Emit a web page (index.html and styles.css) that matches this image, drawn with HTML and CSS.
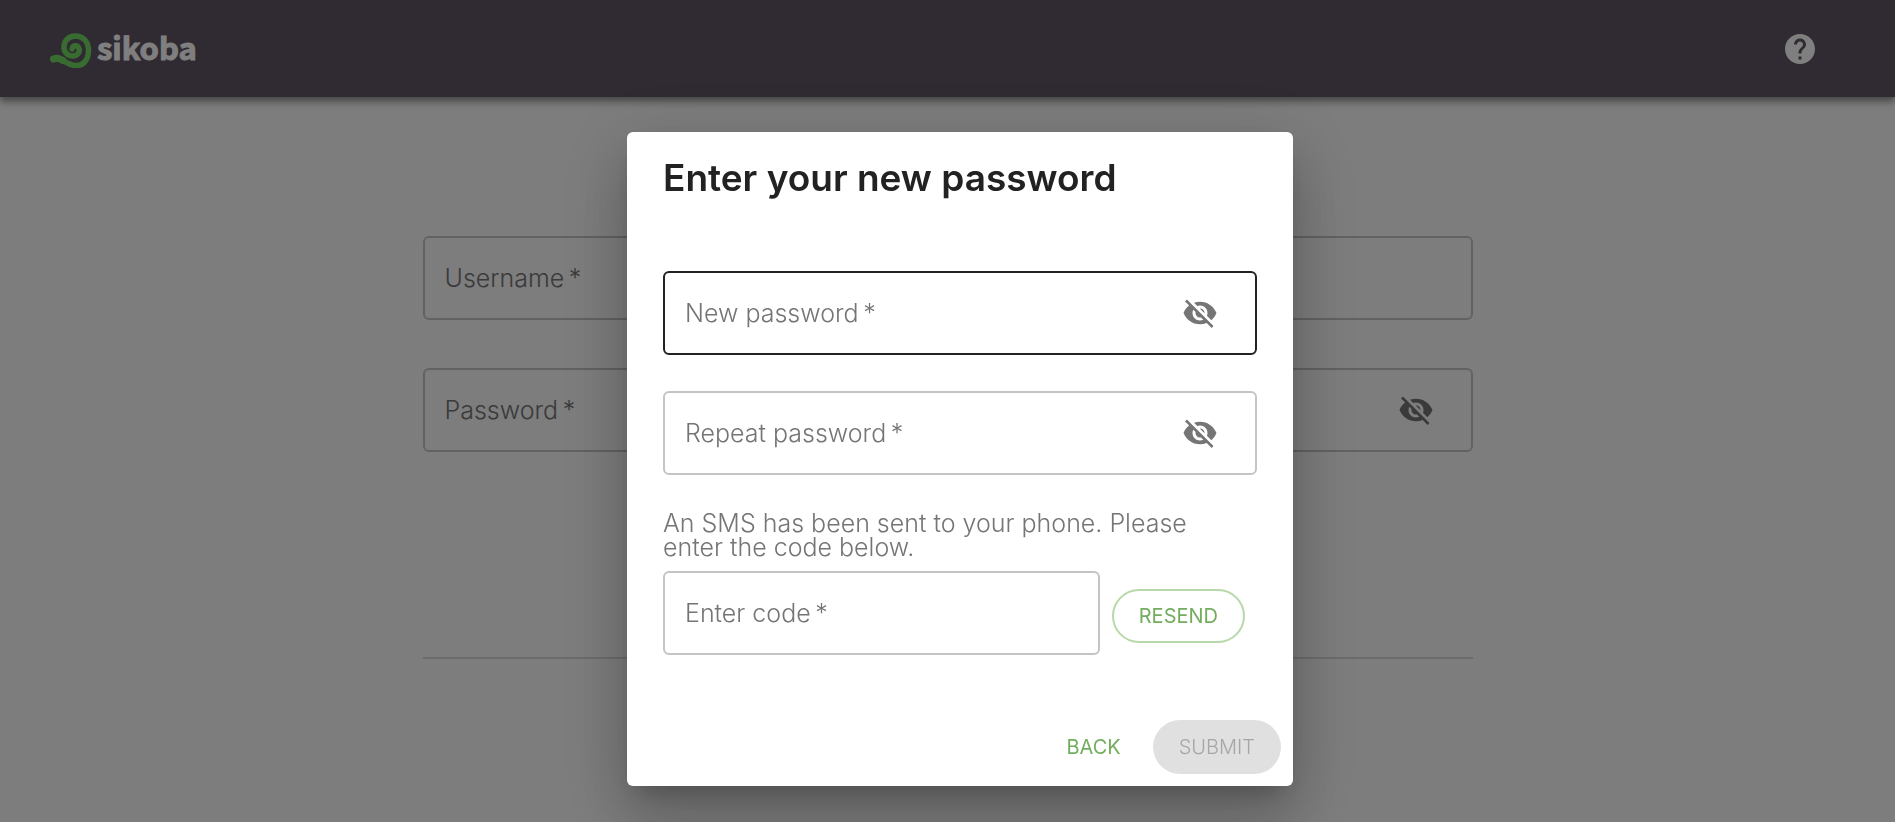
FILE: index.html
```html
<!DOCTYPE html>
<html lang="en">
<head>
<meta charset="utf-8">
<title>Sikoba – Enter your new password</title>
<link rel="stylesheet" href="styles.css">
</head>
<body>
<svg class="sprite" aria-hidden="true">
  <symbol id="eye-off" viewBox="0 0 24 24"><path d="M12 7c2.76 0 5 2.24 5 5 0 .65-.13 1.26-.36 1.83l2.92 2.92c1.51-1.26 2.7-2.89 3.43-4.75-1.73-4.39-6-7.5-11-7.5-1.4 0-2.74.25-3.98.7l2.16 2.16C10.74 7.13 11.35 7 12 7zM2 4.27l2.28 2.28.46.46C3.08 8.3 1.78 10.02 1 12c1.73 4.39 6 7.5 11 7.5 1.55 0 3.03-.3 4.38-.84l.42.42L19.73 22 21 20.73 3.27 3 2 4.27zM7.53 9.8l1.55 1.55c-.05.21-.08.43-.08.65 0 1.66 1.34 3 3 3 .22 0 .44-.03.65-.08l1.55 1.55c-.67.33-1.41.53-2.2.53-2.76 0-5-2.24-5-5 0-.79.2-1.53.53-2.2zm4.31-.78l3.15 3.15.02-.16c0-1.66-1.34-3-3-3l-.17.01z"/></symbol>
</svg>
<header class="topbar">
  <a class="logo" href="#">
    <svg class="logo-mark" viewBox="0 0 42 38" aria-hidden="true"><path stroke-width="7" d="M3.500 29C7 27.500 10 28.500 13 30.500"/><path stroke-width="5.500" d="M5 29.500C12 26.500 16 35.500 26 35.500C34 35.500 38.500 29 38.500 20.500C38.500 11 32.500 6 25.500 6C18 6 13.500 11.500 14 18C14.500 23.500 19 26.500 23.500 26C28 25.500 30 21.500 29 18.500C28 15 23 14.500 22 19"/></svg>
    <span class="logo-name">sikoba</span>
  </a>
  <a class="help" href="#" aria-label="Help">
    <svg class="icon" viewBox="0 0 24 24"><path d="M12 2C6.48 2 2 6.48 2 12s4.48 10 10 10 10-4.48 10-10S17.52 2 12 2zm1 17h-2v-2h2v2zm2.07-7.75l-.9.92C13.45 12.9 13 13.5 13 15h-2v-.5c0-1.1.45-2.1 1.17-2.83l1.24-1.26c.37-.36.59-.86.59-1.41 0-1.1-.9-2-2-2s-2 .9-2 2H8c0-2.21 1.79-4 4-4s4 1.79 4 4c0 .88-.36 1.68-.93 2.25z"/></svg>
  </a>
</header>
<main class="login">
  <div class="field">
    <label for="username">Username&thinsp;*</label>
    <input id="username" type="text" required>
  </div>
  <div class="field">
    <label for="password">Password&thinsp;*</label>
    <input id="password" type="password" required>
    <button class="reveal" type="button" aria-label="Show password"><svg class="icon"><use href="#eye-off"/></svg></button>
  </div>
  <hr class="divider">
</main>
<div class="backdrop">
  <form class="dialog" role="dialog" aria-labelledby="dialog-title">
    <h2 class="title" id="dialog-title">Enter your new password</h2>
    <div class="fields">
      <div class="field field-active">
        <label for="new-password">New password&thinsp;*</label>
        <input id="new-password" type="password" required>
        <button class="reveal" type="button" aria-label="Show password"><svg class="icon"><use href="#eye-off"/></svg></button>
      </div>
      <div class="field">
        <label for="repeat-password">Repeat password&thinsp;*</label>
        <input id="repeat-password" type="password" required>
        <button class="reveal" type="button" aria-label="Show password"><svg class="icon"><use href="#eye-off"/></svg></button>
      </div>
    </div>
    <p class="note">An SMS has been sent to your phone. Please enter the code below.</p>
    <div class="code-row">
      <div class="field">
        <label for="code">Enter code&thinsp;*</label>
        <input id="code" type="text" required>
      </div>
      <button class="btn btn-outline" type="button">RESEND</button>
    </div>
    <div class="actions">
      <button class="btn" type="button">BACK</button>
      <button class="btn btn-filled" type="submit" disabled>SUBMIT</button>
    </div>
  </form>
</div>
</body>
</html>
```
FILE: styles.css
```css
* { box-sizing: border-box; }
html, body { height: 100%; }
body {
  margin: 0;
  overflow: hidden;
  background: #fafafa;
  color: #222;
  font-family: Inter, "Liberation Sans", sans-serif;
  font-size: 25px;
  font-weight: 300;
}
.sprite { display: none; }
.icon { display: block; width: 36px; height: 36px; fill: currentColor; }

.topbar {
  position: relative;
  display: flex;
  align-items: center;
  justify-content: space-between;
  height: 97px;
  padding: 0 77px 0 50px;
  background: #605664;
  color: #fff;
  box-shadow: 0 3px 6px rgba(0, 0, 0, .3), 0 6px 8px rgba(0, 0, 0, .2);
}
.logo { display: flex; align-items: center; gap: 5px; color: inherit; text-decoration: none; }
.logo-mark { width: 42px; height: 38px; fill: none; stroke: #72d862; stroke-linecap: round; }
.logo-name {
  padding-bottom: 4px;
  font: 700 31px/36px "Noto Sans CJK JP", sans-serif;
  -webkit-text-stroke: 1px currentColor;
}
.help { color: inherit; }

.login {
  display: flex;
  flex-direction: column;
  gap: 48px;
  width: min(1050px, calc(100% - 48px));
  margin: 139px auto 0;
}
.divider { width: 100%; height: 2px; margin: 157px 0 0; border: 0; background: #d8d8d8; }

.field {
  display: grid;
  grid-template-columns: 1fr auto;
  align-items: center;
  height: 84px;
  padding: 0 37px 0 20px;
  border: 2px solid #c4c4c4;
  border-radius: 6px;
}
.field-active { border-color: #222; }
.field label { grid-area: 1 / 1; line-height: 28px; color: #757575; }
.field input {
  grid-area: 1 / 1;
  width: 100%;
  height: 48px;
  padding: 0;
  border: 0;
  outline: 0;
  background: transparent;
  font: inherit;
}
.reveal { padding: 0; border: 0; background: none; color: #757575; }

.backdrop {
  position: fixed;
  inset: 0;
  display: flex;
  align-items: flex-start;
  justify-content: center;
  padding: 132px 0 0 25px;
  background: rgba(0, 0, 0, .5);
}
.dialog {
  width: min(666px, 100%);
  padding: 24px 36px 12px;
  border-radius: 6px;
  background: #fff;
  box-shadow: 0 16px 22px -10px rgba(0, 0, 0, .2), 0 36px 57px 4px rgba(0, 0, 0, .14), 0 14px 69px 12px rgba(0, 0, 0, .12);
}
.title { margin: 0; font-size: 37px; line-height: 43px; font-weight: 600; }
.fields { display: grid; gap: 36px; margin-top: 72px; }
.note { margin: 36px 0 12px; padding-right: 48px; line-height: 24px; color: #757575; }
.code-row { display: flex; align-items: center; gap: 12px; padding-right: 12px; }
.code-row .field { flex: 1; }
.code-row .btn { margin-top: 6px; }
.btn {
  height: 54px;
  padding: 0 24px;
  border: 2px solid transparent;
  border-radius: 27px;
  background: none;
  color: #74ad5f;
  font: 400 20px/24px Inter, "Liberation Sans", sans-serif;
}
.btn-outline { padding: 0 25px; border-color: #b9d8a9; }
.btn-filled { background: #e0e0e0; color: #a6a6a6; font-weight: 300; }
.actions { display: flex; justify-content: flex-end; gap: 6px; margin: 65px -24px 0 0; }
```
